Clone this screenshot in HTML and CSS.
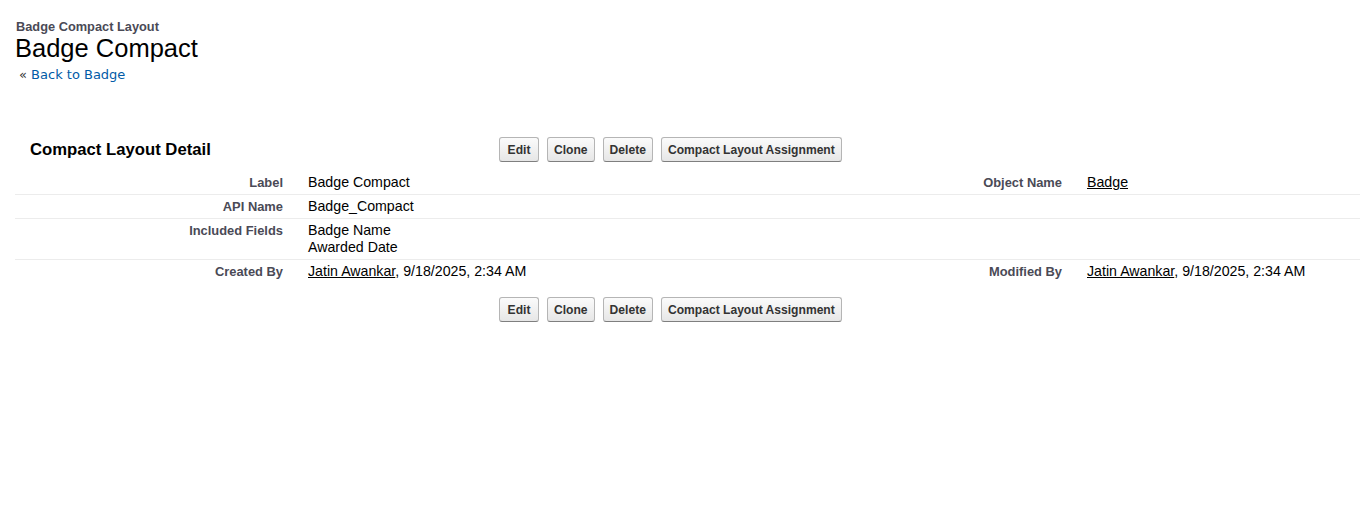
FILE: index.html
```html
<!DOCTYPE html>
<html>
<head>
<meta charset="utf-8">
<link rel="stylesheet" href="styles.css">
</head>
<body>
<div class="page">
  <div class="page-title">
    <div class="page-type">Badge Compact Layout</div>
    <h1 class="page-desc">Badge Compact</h1>
    <div class="breadcrumb">&laquo;&nbsp;<a href="#">Back to Badge</a></div>
  </div>

  <div class="block">
    <div class="pb-header">
      <div class="pb-title"><h2>Compact Layout Detail</h2></div>
      <div class="pb-buttons">
        <button class="btn">Edit</button>
        <button class="btn">Clone</button>
        <button class="btn">Delete</button>
        <button class="btn">Compact Layout Assignment</button>
      </div>
    </div>

    <div class="detail">
      <div class="row">
        <div class="label">Label</div>
        <div class="data">Badge Compact</div>
        <div class="label">Object Name</div>
        <div class="data"><a href="#" class="ulink">Badge</a></div>
      </div>
      <div class="row">
        <div class="label">API Name</div>
        <div class="data">Badge_Compact</div>
        <div class="label"></div>
        <div class="data"></div>
      </div>
      <div class="row">
        <div class="label">Included Fields</div>
        <div class="data">Badge Name<br>Awarded Date</div>
        <div class="label"></div>
        <div class="data"></div>
      </div>
      <div class="row last">
        <div class="label">Created By</div>
        <div class="data"><a href="#" class="ulink">Jatin Awankar</a>, 9/18/2025, 2:34 AM</div>
        <div class="label">Modified By</div>
        <div class="data"><a href="#" class="ulink">Jatin Awankar</a>, 9/18/2025, 2:34 AM</div>
      </div>
    </div>

    <div class="pb-footer">
      <div class="pb-title"></div>
      <div class="pb-buttons">
        <button class="btn">Edit</button>
        <button class="btn">Clone</button>
        <button class="btn">Delete</button>
        <button class="btn">Compact Layout Assignment</button>
      </div>
    </div>
  </div>
</div>
</body>
</html>
```

FILE: styles.css
```css
* { box-sizing: border-box; }
html, body {
  margin: 0;
  padding: 0;
  background: #fff;
}
body {
  font-family: "Liberation Sans", Arial, sans-serif;
  font-size: 14px;
  color: #000;
}
.page {
  padding: 19px 0 0 15px;
}
.page-title {
  padding-left: 1px;
}
.page-type {
  font-size: 12.8px;
  font-weight: bold;
  color: #4a4a56;
  line-height: 15px;
}
.page-desc {
  margin: 0;
  font-size: 25.5px;
  font-weight: normal;
  line-height: 29px;
  color: #000;
  margin-left: -1px;
}
.breadcrumb {
  font-family: "DejaVu Sans", Verdana, sans-serif;
  font-size: 13px;
  line-height: 16px;
  color: #333;
  padding-left: 3px;
  margin-top: 4px;
}
.breadcrumb a {
  color: #015ba7;
  text-decoration: none;
}
.block {
  margin-top: 53px;
}
.pb-header, .pb-footer {
  display: grid;
  grid-template-columns: 484px 1fr;
  align-items: center;
}
.pb-header {
  height: 27px;
  margin-bottom: 8px;
}
.pb-footer {
  margin-top: 13px;
  height: 27px;
}
.pb-title h2 {
  margin: 0;
  padding-left: 15px;
  font-size: 16.7px;
  font-weight: bold;
  line-height: 20px;
  color: #000;
}
.pb-buttons {
  display: flex;
  gap: 8px;
}
.btn {
  font-family: "Liberation Sans", Arial, sans-serif;
  font-size: 12.1px;
  font-weight: bold;
  color: #333;
  height: 25px;
  min-width: 40px;
  padding: 0 6px;
  border: 1px solid #b5b5b5;
  border-bottom-color: #7f7f7f;
  border-radius: 3px;
  background: linear-gradient(#fbfbfb, #e6e6e6);
  margin: 0;
}
.detail {
  display: flex;
  flex-direction: column;
}
.row {
  display: grid;
  grid-template-columns: 280px 499px 280px 1fr;
  border-bottom: 1px solid #ececec;
  line-height: 17px;
}
.row.last {
  border-bottom: none;
}
.label {
  padding: 3px 12px 3px 0;
  text-align: right;
  font-size: 12.9px;
  font-weight: bold;
  color: #4a4a56;
}
.data {
  padding: 3px 0 3px 13px;
  font-size: 14.2px;
  color: #000;
}
.ulink {
  color: #000;
  text-decoration: underline;
}
```
